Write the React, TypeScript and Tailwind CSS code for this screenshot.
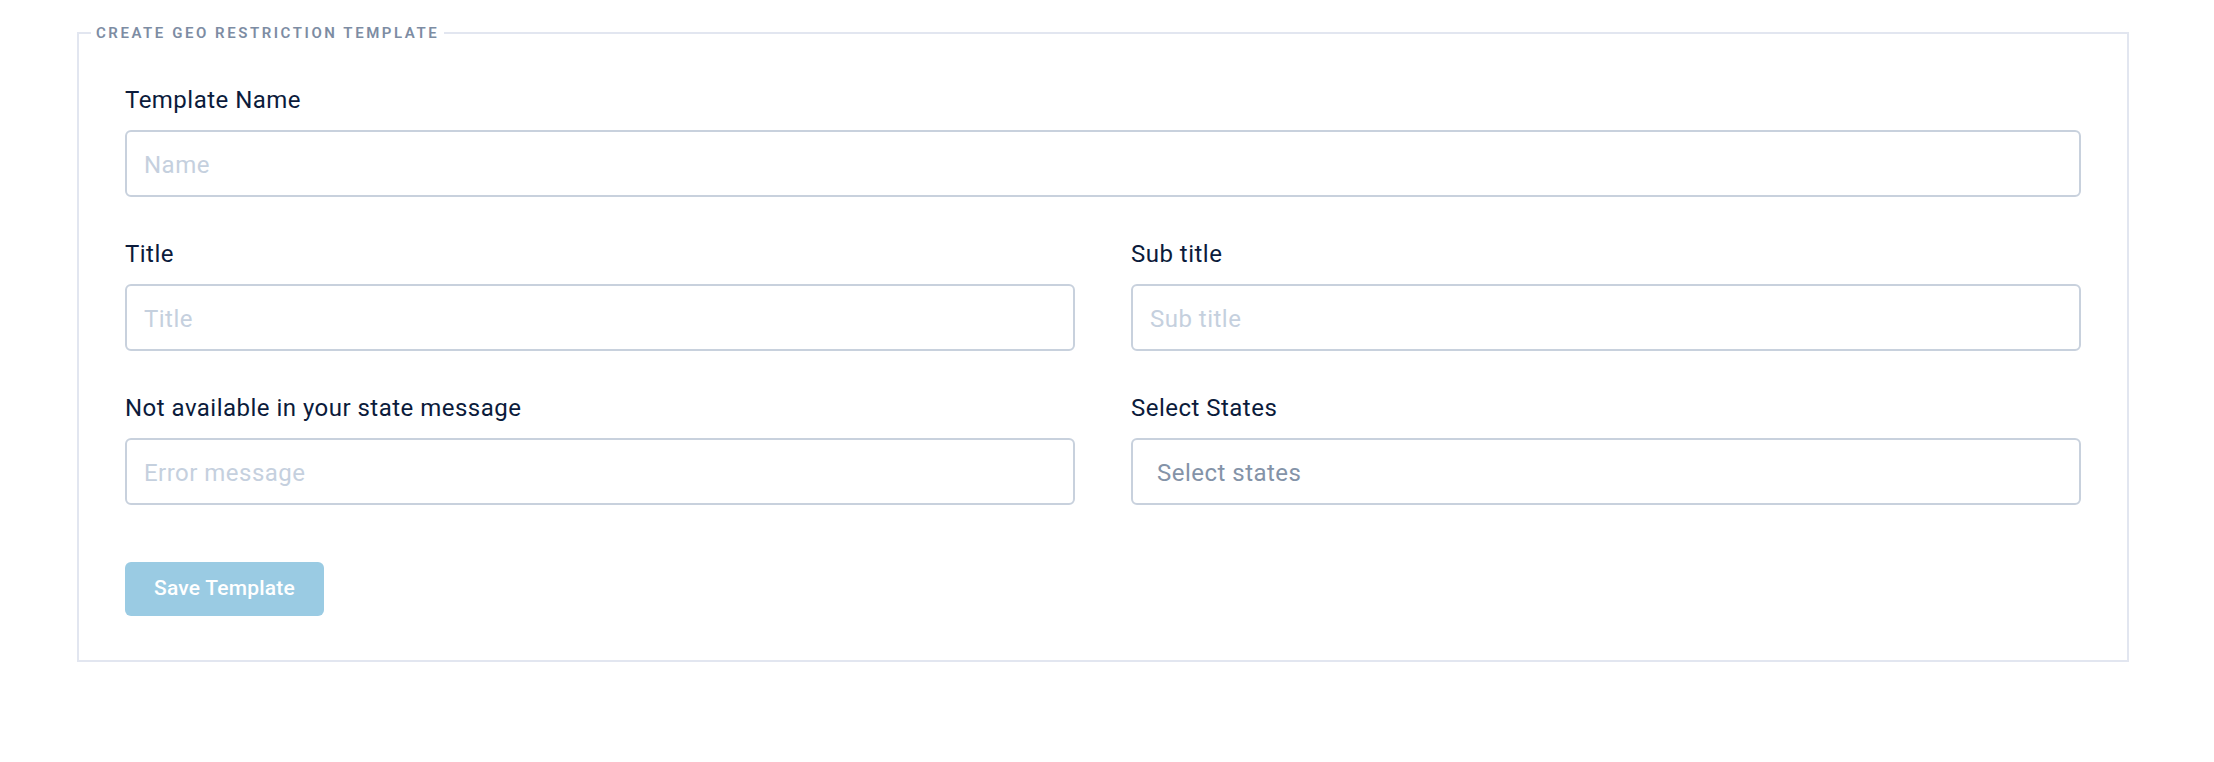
import React from 'react';

const font = { fontFamily: 'Roboto, "Noto Sans", Arial, sans-serif' };

type FieldProps = {
  label: string;
  placeholder: string;
};

const Field = ({ label, placeholder }: FieldProps) => (
  <div className="flex flex-col">
    <label className="mb-3 text-[24px] leading-[36px] tracking-[0.02em] text-[#0b1b3b]">{label}</label>
    <input
      placeholder={placeholder}
      className="h-[67px] w-full rounded-[6px] border-2 border-[#c8d1dd] bg-white px-[17px] pt-[3px] text-[24px] tracking-[0.02em] text-[#0b1b3b] outline-none placeholder:text-[#c5d0de]"
    />
  </div>
);

export default function App() {
  return (
    <div className="min-h-screen bg-white pt-[23px] pl-[77px] pr-[85px]" style={font}>
      <fieldset className="border-2 border-[#e2e6f0] px-[12px] pb-[44px]">
        <legend className="px-[5px] text-[15px] font-semibold leading-[20px] tracking-[0.17em] text-[#7d8ca3]">
          CREATE GEO RESTRICTION TEMPLATE
        </legend>
        <div className="flex flex-col gap-[39px] px-[34px] pt-[39px]">
          <Field label="Template Name" placeholder="Name" />
          <div className="grid grid-cols-2 gap-x-[56px]">
            <Field label="Title" placeholder="Title" />
            <Field label="Sub title" placeholder="Sub title" />
          </div>
          <div className="grid grid-cols-2 gap-x-[56px]">
            <Field label="Not available in your state message" placeholder="Error message" />
            <div className="flex flex-col">
              <label className="mb-3 text-[24px] leading-[36px] tracking-[0.02em] text-[#0b1b3b]">Select States</label>
              <div className="flex h-[67px] w-full items-center rounded-[6px] border-2 border-[#c8d1dd] bg-white px-[24px] pt-[3px] text-[24px] tracking-[0.02em] text-[#8493a8]">
                Select states
              </div>
            </div>
          </div>
          <div className="pt-[18px]">
            <button className="h-[54px] w-[199px] rounded-[6px] bg-[#9acbe3] text-[21px] font-medium tracking-[0.01em] text-white">
              Save Template
            </button>
          </div>
        </div>
      </fieldset>
    </div>
  );
}
